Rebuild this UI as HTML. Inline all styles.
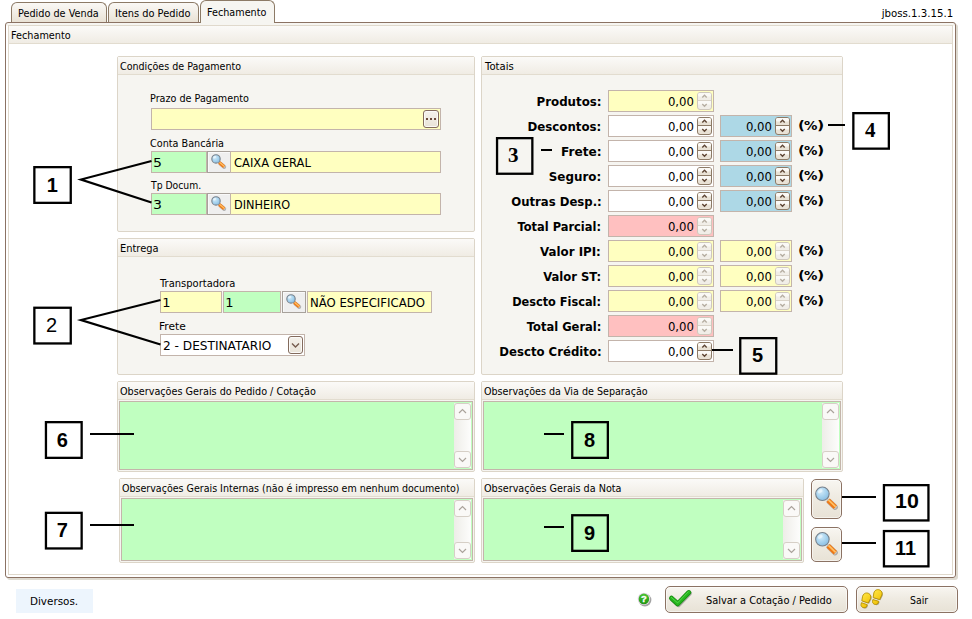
<!DOCTYPE html><html><head><meta charset="utf-8"><title>Fechamento</title><style>
*{box-sizing:border-box;margin:0;padding:0}
html,body{width:972px;height:619px;overflow:hidden;background:#fff}
body{position:relative;font-family:'DejaVu Sans','Liberation Sans',sans-serif;font-size:11px;color:#000}
.a{position:absolute}
.t{position:absolute;white-space:nowrap;transform-origin:0 50%}
.grp{position:absolute;border:1px solid #dcd5c8;background:#f6f5f1;border-radius:2px}
.grp .hd{position:absolute;left:0;right:0;top:0;height:18px;border-bottom:1px solid #e2dccf;background:linear-gradient(#fbfaf8,#f0ece4)}
.in{position:absolute;border:1px solid #c3b4ab;height:22px}
.y{background:#ffffc0}.g{background:#c0ffc0}.w{background:#fff}.bl{background:#add8e6}.p{background:#ffc0c0}
.ln{position:absolute;background:#000;height:2px}
.sp{position:absolute;width:15px;height:18px;border:1px solid #8c7a66;border-radius:3px;background:linear-gradient(#fdfcfa,#e9e2d6)}
.sp.dis{border-color:#cfc8bc;background:#f6f4ee}
.btn{position:absolute;border:1px solid #8b7263;border-radius:5px;background:linear-gradient(#f8f6f1,#efebe2 45%,#e8e2d6);box-shadow:inset 0 0 0 1px rgba(255,255,255,.55)}
</style></head><body>
<div class="a" style="left:5px;top:22px;width:951px;height:556px;border:1px solid #8b7263;border-radius:3px;background:linear-gradient(#f6f5f1 0,#f6f5f1 3px,#fff 3px);box-shadow:2px 2px 0 #dedad0"></div>
<div class="a" style="left:11px;top:2px;width:96px;height:20px;border:1px solid #8c7a66;border-bottom:none;border-radius:6px 6px 0 0;background:linear-gradient(#faf8f5,#f3efe8 45%,#e9e2d5)"></div>
<div class="a" style="left:108px;top:2px;width:91px;height:20px;border:1px solid #8c7a66;border-bottom:none;border-radius:6px 6px 0 0;background:linear-gradient(#faf8f5,#f3efe8 45%,#e9e2d5)"></div>
<div class="a" style="left:200px;top:0px;width:75px;height:23px;border:1px solid #8c7a66;border-bottom:none;border-radius:6px 6px 0 0;background:#f6f5f1"></div>
<div class="t" style="left:18.02px;top:7.00px;font-size:11px;line-height:13px;transform:scaleX(0.8811);">Pedido de Venda</div>
<div class="t" style="left:115.31px;top:7.00px;font-size:11px;line-height:13px;transform:scaleX(0.8928);">Itens do Pedido</div>
<div class="t" style="left:206.92px;top:6.00px;font-size:11px;line-height:13px;transform:scaleX(0.8758);">Fechamento</div>
<div class="t" style="right:18.37px;transform-origin:100% 50%;top:7.00px;font-size:11px;line-height:13px;transform:scaleX(0.9263);">jboss.1.3.15.1</div>
<div class="a" style="left:8px;top:25px;width:945px;height:550px;border:1px solid #e0d9cc;background:#fff"></div>
<div class="a" style="left:9px;top:26px;width:943px;height:18px;border-bottom:1px solid #e2dccf;background:linear-gradient(#fbfaf8,#f0ece4)"></div>
<div class="t" style="left:11.22px;top:29.00px;font-size:11px;line-height:13px;transform:scaleX(0.8803);">Fechamento</div>
<div class="grp" style="left:117px;top:56px;width:358px;height:176px"><div class="hd"></div></div>
<div class="t" style="left:120.33px;top:60.00px;font-size:11px;line-height:13px;transform:scaleX(0.8674);">Condições de Pagamento</div>
<div class="grp" style="left:117px;top:238px;width:358px;height:137px"><div class="hd"></div></div>
<div class="t" style="left:120.30px;top:242.00px;font-size:11px;line-height:13px;transform:scaleX(0.8976);">Entrega</div>
<div class="grp" style="left:481px;top:56px;width:362px;height:319px"><div class="hd"></div></div>
<div class="t" style="left:485.20px;top:60.00px;font-size:11px;line-height:13px;transform:scaleX(0.9161);">Totais</div>
<div class="grp" style="left:117px;top:381px;width:358px;height:91px"><div class="hd"></div></div>
<div class="t" style="left:120.32px;top:385.00px;font-size:11px;line-height:13px;transform:scaleX(0.8779);">Observações Gerais do Pedido / Cotação</div>
<div class="grp" style="left:481px;top:381px;width:362px;height:91px"><div class="hd"></div></div>
<div class="t" style="left:484.33px;top:385.00px;font-size:11px;line-height:13px;transform:scaleX(0.8706);">Observações da Via de Separação</div>
<div class="grp" style="left:119px;top:478px;width:356px;height:85px"><div class="hd"></div></div>
<div class="t" style="left:122.34px;top:482.00px;font-size:11px;line-height:13px;transform:scaleX(0.8643);">Observações Gerais Internas (não é impresso em nenhum documento)</div>
<div class="grp" style="left:481px;top:478px;width:323px;height:85px"><div class="hd"></div></div>
<div class="t" style="left:484.32px;top:482.00px;font-size:11px;line-height:13px;transform:scaleX(0.8774);">Observações Gerais da Nota</div>
<svg class="a" style="left:0;top:0" width="0" height="0"><defs><radialGradient id="mg" cx="38%" cy="32%" r="75%"><stop offset="0" stop-color="#d4ecfa"/><stop offset="0.55" stop-color="#a6d2ee"/><stop offset="1" stop-color="#86bbe0"/></radialGradient></defs></svg>
<div class="t" style="left:150.12px;top:92.00px;font-size:11px;line-height:13px;transform:scaleX(0.8750);">Prazo de Pagamento</div>
<div class="in y" style="left:151px;top:108px;width:290px;height:22px"></div>
<div class="a" style="left:423px;top:110px;width:16px;height:18px;border:1px solid #836b5d;border-radius:3px;background:linear-gradient(#f4f1eb,#e9e3d8);box-shadow:inset 0 0 0 1px #fbfaf8"></div>
<div class="a" style="left:426px;top:118px;width:2px;height:2px;background:#6b4a3a;box-shadow:4px 0 #6b4a3a,8px 0 #6b4a3a"></div>
<div class="t" style="left:150.12px;top:137.00px;font-size:11px;line-height:13px;transform:scaleX(0.8780);">Conta Bancária</div>
<div class="in g" style="left:151px;top:151px;width:56px;height:22px"></div>
<div class="t" style="left:153.22px;top:155.00px;font-size:13px;line-height:15px;transform:scaleX(1.0833);">5</div>
<div class="a" style="left:207px;top:151px;width:24px;height:22px;border:1px solid #a7a19b;background:#efefef;box-shadow:inset 1px 1px 0 #f9f9f9"></div>
<svg class="a" style="left:0;top:0;overflow:visible" width="1" height="1"><line x1="220.46" y1="163.86" x2="224.24" y2="167.04" stroke="#555" stroke-opacity=".4" stroke-width="3.90" stroke-linecap="round"/><line x1="219.86" y1="163.06" x2="223.64" y2="166.24" stroke="#c4c7cb" stroke-width="3.30" stroke-linecap="round"/><line x1="219.23" y1="162.53" x2="224.19" y2="166.71" stroke="#ee7816" stroke-width="3.30"/><line x1="219.44" y1="162.28" x2="224.41" y2="166.45" stroke="#ffc064" stroke-width="1.19"/><circle cx="216" cy="158.9" r="4.20" fill="url(#mg)" stroke="#78818b" stroke-width="1.1"/><ellipse cx="214.57" cy="157.19" rx="1.71" ry="1.14" fill="#fff" fill-opacity=".5" transform="rotate(-35 214.57 157.19)"/></svg>
<div class="in y" style="left:230px;top:151px;width:211px;height:22px"></div>
<div class="t" style="left:233.71px;top:155.00px;font-size:13px;line-height:15px;transform:scaleX(0.8872);">CAIXA GERAL</div>
<div class="t" style="left:151.00px;top:179.00px;font-size:11px;line-height:13px;transform:scaleX(0.8407);">Tp Docum.</div>
<div class="in g" style="left:151px;top:193px;width:56px;height:22px"></div>
<div class="t" style="left:153.22px;top:197.00px;font-size:13px;line-height:15px;transform:scaleX(1.0833);">3</div>
<div class="a" style="left:207px;top:193px;width:24px;height:22px;border:1px solid #a7a19b;background:#efefef;box-shadow:inset 1px 1px 0 #f9f9f9"></div>
<svg class="a" style="left:0;top:0;overflow:visible" width="1" height="1"><line x1="220.46" y1="205.86" x2="224.24" y2="209.04" stroke="#555" stroke-opacity=".4" stroke-width="3.90" stroke-linecap="round"/><line x1="219.86" y1="205.06" x2="223.64" y2="208.24" stroke="#c4c7cb" stroke-width="3.30" stroke-linecap="round"/><line x1="219.23" y1="204.53" x2="224.19" y2="208.71" stroke="#ee7816" stroke-width="3.30"/><line x1="219.44" y1="204.28" x2="224.41" y2="208.45" stroke="#ffc064" stroke-width="1.19"/><circle cx="216" cy="200.9" r="4.20" fill="url(#mg)" stroke="#78818b" stroke-width="1.1"/><ellipse cx="214.57" cy="199.19" rx="1.71" ry="1.14" fill="#fff" fill-opacity=".5" transform="rotate(-35 214.57 199.19)"/></svg>
<div class="in y" style="left:230px;top:193px;width:211px;height:22px"></div>
<div class="t" style="left:233.73px;top:197.00px;font-size:13px;line-height:15px;transform:scaleX(0.8683);">DINHEIRO</div>
<div class="t" style="left:160.00px;top:277.00px;font-size:11px;line-height:13px;transform:scaleX(0.9037);">Transportadora</div>
<div class="in y" style="left:160px;top:291px;width:62px;height:22px"></div>
<div class="t" style="left:162.20px;top:295.00px;font-size:13px;line-height:15px;">1</div>
<div class="in g" style="left:223px;top:291px;width:58px;height:22px"></div>
<div class="t" style="left:225.20px;top:295.00px;font-size:13px;line-height:15px;">1</div>
<div class="a" style="left:282px;top:291px;width:24px;height:22px;border:1px solid #a7a19b;background:#efefef;box-shadow:inset 1px 1px 0 #f9f9f9"></div>
<svg class="a" style="left:0;top:0;overflow:visible" width="1" height="1"><line x1="295.46" y1="303.86" x2="299.24" y2="307.04" stroke="#555" stroke-opacity=".4" stroke-width="3.90" stroke-linecap="round"/><line x1="294.86" y1="303.06" x2="298.64" y2="306.24" stroke="#c4c7cb" stroke-width="3.30" stroke-linecap="round"/><line x1="294.23" y1="302.53" x2="299.19" y2="306.71" stroke="#ee7816" stroke-width="3.30"/><line x1="294.44" y1="302.28" x2="299.41" y2="306.45" stroke="#ffc064" stroke-width="1.19"/><circle cx="291" cy="298.9" r="4.20" fill="url(#mg)" stroke="#78818b" stroke-width="1.1"/><ellipse cx="289.57" cy="297.19" rx="1.71" ry="1.14" fill="#fff" fill-opacity=".5" transform="rotate(-35 289.57 297.19)"/></svg>
<div class="in y" style="left:307px;top:291px;width:125px;height:22px"></div>
<div class="t" style="left:309.50px;top:295.00px;font-size:13px;line-height:15px;transform:scaleX(0.8992);">NÃO ESPECIFICADO</div>
<div class="t" style="left:159.03px;top:320.00px;font-size:11px;line-height:13px;transform:scaleX(0.9692);">Frete</div>
<div class="in w" style="left:160px;top:334px;width:145px;height:22px"></div>
<div class="t" style="left:162.67px;top:338.00px;font-size:13px;line-height:15px;transform:scaleX(0.9333);">2 - DESTINATARIO</div>
<div class="a" style="left:288px;top:336px;width:15px;height:18px;border:1px solid #836b5d;border-radius:3px;background:linear-gradient(#f4f1eb,#e9e3d8);box-shadow:inset 0 0 0 1px #fbfaf8"></div>
<svg class="a" style="left:291px;top:342px" width="9" height="7" viewBox="0 0 9 7"><path d="M1 1.5 L4.5 5 L8 1.5" fill="none" stroke="#755b4d" stroke-width="1.4"/></svg>
<div class="t" style="right:370.62px;transform-origin:100% 50%;top:94.00px;font-size:13px;line-height:15px;font-weight:bold;transform:scaleX(0.9087);">Produtos:</div>
<div class="in y" style="left:608px;top:90px;width:106px;height:22px"></div>
<div class="t" style="right:277.74px;transform-origin:100% 50%;top:94.00px;font-size:13px;line-height:15px;transform:scaleX(0.9000);">0,00</div>
<svg class="a" style="left:697px;top:92px" width="15" height="18" viewBox="0 0 15 18"><rect x="0.5" y="0.5" width="14" height="17" rx="2.5" fill="#f1eee8" stroke="#cfc8bc"/><rect x="1" y="1" width="13" height="3.5" rx="1.5" fill="#faf9f6"/><rect x="1" y="9" width="13" height="3.5" fill="#faf9f6"/><line x1="1" y1="8.5" x2="14" y2="8.5" stroke="#d9d3c8" stroke-width="1"/><path d="M5.3 5.4 L7.5 3.2 L9.7 5.4 M5.3 12 L7.5 14.2 L9.7 12" fill="none" stroke="#b6aea2" stroke-width="1.35"/></svg>
<div class="t" style="right:370.79px;transform-origin:100% 50%;top:119.00px;font-size:13px;line-height:15px;font-weight:bold;transform:scaleX(0.9076);">Descontos:</div>
<div class="in w" style="left:608px;top:115px;width:106px;height:22px"></div>
<div class="t" style="right:277.74px;transform-origin:100% 50%;top:119.00px;font-size:13px;line-height:15px;transform:scaleX(0.9000);">0,00</div>
<svg class="a" style="left:697px;top:117px" width="15" height="18" viewBox="0 0 15 18"><rect x="0.5" y="0.5" width="14" height="17" rx="2.5" fill="#e9e2d6" stroke="#8c7a66"/><rect x="1" y="1" width="13" height="3.5" rx="1.5" fill="#fbf9f6"/><rect x="1" y="9" width="13" height="3.5" fill="#fbf9f6"/><line x1="1" y1="8.5" x2="14" y2="8.5" stroke="#8c7a66" stroke-width="1"/><path d="M5.3 5.4 L7.5 3.2 L9.7 5.4 M5.3 12 L7.5 14.2 L9.7 12" fill="none" stroke="#5d4433" stroke-width="1.35"/></svg>
<div class="in bl" style="left:720px;top:115px;width:72px;height:22px"></div>
<div class="t" style="right:199.84px;transform-origin:100% 50%;top:119.00px;font-size:13px;line-height:15px;transform:scaleX(0.9000);">0,00</div>
<svg class="a" style="left:775px;top:117px" width="15" height="18" viewBox="0 0 15 18"><rect x="0.5" y="0.5" width="14" height="17" rx="2.5" fill="#e9e2d6" stroke="#8c7a66"/><rect x="1" y="1" width="13" height="3.5" rx="1.5" fill="#fbf9f6"/><rect x="1" y="9" width="13" height="3.5" fill="#fbf9f6"/><line x1="1" y1="8.5" x2="14" y2="8.5" stroke="#8c7a66" stroke-width="1"/><path d="M5.3 5.4 L7.5 3.2 L9.7 5.4 M5.3 12 L7.5 14.2 L9.7 12" fill="none" stroke="#5d4433" stroke-width="1.35"/></svg>
<div class="t" style="left:797.65px;top:118.00px;font-size:13px;line-height:15px;font-weight:bold;transform:scaleX(1.1500);">(</div>
<div class="t" style="left:804.00px;top:118.00px;font-size:13px;line-height:15px;font-weight:bold;transform:scaleX(1.0308);">%</div>
<div class="t" style="left:817.17px;top:118.00px;font-size:13px;line-height:15px;font-weight:bold;transform:scaleX(1.2250);">)</div>
<div class="t" style="right:370.59px;transform-origin:100% 50%;top:144.00px;font-size:13px;line-height:15px;font-weight:bold;transform:scaleX(0.9317);">Frete:</div>
<div class="in w" style="left:608px;top:140px;width:106px;height:22px"></div>
<div class="t" style="right:277.74px;transform-origin:100% 50%;top:144.00px;font-size:13px;line-height:15px;transform:scaleX(0.9000);">0,00</div>
<svg class="a" style="left:697px;top:142px" width="15" height="18" viewBox="0 0 15 18"><rect x="0.5" y="0.5" width="14" height="17" rx="2.5" fill="#e9e2d6" stroke="#8c7a66"/><rect x="1" y="1" width="13" height="3.5" rx="1.5" fill="#fbf9f6"/><rect x="1" y="9" width="13" height="3.5" fill="#fbf9f6"/><line x1="1" y1="8.5" x2="14" y2="8.5" stroke="#8c7a66" stroke-width="1"/><path d="M5.3 5.4 L7.5 3.2 L9.7 5.4 M5.3 12 L7.5 14.2 L9.7 12" fill="none" stroke="#5d4433" stroke-width="1.35"/></svg>
<div class="in bl" style="left:720px;top:140px;width:72px;height:22px"></div>
<div class="t" style="right:199.84px;transform-origin:100% 50%;top:144.00px;font-size:13px;line-height:15px;transform:scaleX(0.9000);">0,00</div>
<svg class="a" style="left:775px;top:142px" width="15" height="18" viewBox="0 0 15 18"><rect x="0.5" y="0.5" width="14" height="17" rx="2.5" fill="#e9e2d6" stroke="#8c7a66"/><rect x="1" y="1" width="13" height="3.5" rx="1.5" fill="#fbf9f6"/><rect x="1" y="9" width="13" height="3.5" fill="#fbf9f6"/><line x1="1" y1="8.5" x2="14" y2="8.5" stroke="#8c7a66" stroke-width="1"/><path d="M5.3 5.4 L7.5 3.2 L9.7 5.4 M5.3 12 L7.5 14.2 L9.7 12" fill="none" stroke="#5d4433" stroke-width="1.35"/></svg>
<div class="t" style="left:797.65px;top:143.00px;font-size:13px;line-height:15px;font-weight:bold;transform:scaleX(1.1500);">(</div>
<div class="t" style="left:804.00px;top:143.00px;font-size:13px;line-height:15px;font-weight:bold;transform:scaleX(1.0308);">%</div>
<div class="t" style="left:817.17px;top:143.00px;font-size:13px;line-height:15px;font-weight:bold;transform:scaleX(1.2250);">)</div>
<div class="t" style="right:370.83px;transform-origin:100% 50%;top:169.00px;font-size:13px;line-height:15px;font-weight:bold;transform:scaleX(0.9164);">Seguro:</div>
<div class="in w" style="left:608px;top:165px;width:106px;height:22px"></div>
<div class="t" style="right:277.74px;transform-origin:100% 50%;top:169.00px;font-size:13px;line-height:15px;transform:scaleX(0.9000);">0,00</div>
<svg class="a" style="left:697px;top:167px" width="15" height="18" viewBox="0 0 15 18"><rect x="0.5" y="0.5" width="14" height="17" rx="2.5" fill="#e9e2d6" stroke="#8c7a66"/><rect x="1" y="1" width="13" height="3.5" rx="1.5" fill="#fbf9f6"/><rect x="1" y="9" width="13" height="3.5" fill="#fbf9f6"/><line x1="1" y1="8.5" x2="14" y2="8.5" stroke="#8c7a66" stroke-width="1"/><path d="M5.3 5.4 L7.5 3.2 L9.7 5.4 M5.3 12 L7.5 14.2 L9.7 12" fill="none" stroke="#5d4433" stroke-width="1.35"/></svg>
<div class="in bl" style="left:720px;top:165px;width:72px;height:22px"></div>
<div class="t" style="right:199.84px;transform-origin:100% 50%;top:169.00px;font-size:13px;line-height:15px;transform:scaleX(0.9000);">0,00</div>
<svg class="a" style="left:775px;top:167px" width="15" height="18" viewBox="0 0 15 18"><rect x="0.5" y="0.5" width="14" height="17" rx="2.5" fill="#e9e2d6" stroke="#8c7a66"/><rect x="1" y="1" width="13" height="3.5" rx="1.5" fill="#fbf9f6"/><rect x="1" y="9" width="13" height="3.5" fill="#fbf9f6"/><line x1="1" y1="8.5" x2="14" y2="8.5" stroke="#8c7a66" stroke-width="1"/><path d="M5.3 5.4 L7.5 3.2 L9.7 5.4 M5.3 12 L7.5 14.2 L9.7 12" fill="none" stroke="#5d4433" stroke-width="1.35"/></svg>
<div class="t" style="left:797.65px;top:168.00px;font-size:13px;line-height:15px;font-weight:bold;transform:scaleX(1.1500);">(</div>
<div class="t" style="left:804.00px;top:168.00px;font-size:13px;line-height:15px;font-weight:bold;transform:scaleX(1.0308);">%</div>
<div class="t" style="left:817.17px;top:168.00px;font-size:13px;line-height:15px;font-weight:bold;transform:scaleX(1.2250);">)</div>
<div class="t" style="right:370.41px;transform-origin:100% 50%;top:194.00px;font-size:13px;line-height:15px;font-weight:bold;transform:scaleX(0.8980);">Outras Desp.:</div>
<div class="in w" style="left:608px;top:190px;width:106px;height:22px"></div>
<div class="t" style="right:277.74px;transform-origin:100% 50%;top:194.00px;font-size:13px;line-height:15px;transform:scaleX(0.9000);">0,00</div>
<svg class="a" style="left:697px;top:192px" width="15" height="18" viewBox="0 0 15 18"><rect x="0.5" y="0.5" width="14" height="17" rx="2.5" fill="#e9e2d6" stroke="#8c7a66"/><rect x="1" y="1" width="13" height="3.5" rx="1.5" fill="#fbf9f6"/><rect x="1" y="9" width="13" height="3.5" fill="#fbf9f6"/><line x1="1" y1="8.5" x2="14" y2="8.5" stroke="#8c7a66" stroke-width="1"/><path d="M5.3 5.4 L7.5 3.2 L9.7 5.4 M5.3 12 L7.5 14.2 L9.7 12" fill="none" stroke="#5d4433" stroke-width="1.35"/></svg>
<div class="in bl" style="left:720px;top:190px;width:72px;height:22px"></div>
<div class="t" style="right:199.84px;transform-origin:100% 50%;top:194.00px;font-size:13px;line-height:15px;transform:scaleX(0.9000);">0,00</div>
<svg class="a" style="left:775px;top:192px" width="15" height="18" viewBox="0 0 15 18"><rect x="0.5" y="0.5" width="14" height="17" rx="2.5" fill="#e9e2d6" stroke="#8c7a66"/><rect x="1" y="1" width="13" height="3.5" rx="1.5" fill="#fbf9f6"/><rect x="1" y="9" width="13" height="3.5" fill="#fbf9f6"/><line x1="1" y1="8.5" x2="14" y2="8.5" stroke="#8c7a66" stroke-width="1"/><path d="M5.3 5.4 L7.5 3.2 L9.7 5.4 M5.3 12 L7.5 14.2 L9.7 12" fill="none" stroke="#5d4433" stroke-width="1.35"/></svg>
<div class="t" style="left:797.65px;top:193.00px;font-size:13px;line-height:15px;font-weight:bold;transform:scaleX(1.1500);">(</div>
<div class="t" style="left:804.00px;top:193.00px;font-size:13px;line-height:15px;font-weight:bold;transform:scaleX(1.0308);">%</div>
<div class="t" style="left:817.17px;top:193.00px;font-size:13px;line-height:15px;font-weight:bold;transform:scaleX(1.2250);">)</div>
<div class="t" style="right:371.12px;transform-origin:100% 50%;top:219.00px;font-size:13px;line-height:15px;font-weight:bold;transform:scaleX(0.8798);">Total Parcial:</div>
<div class="in p" style="left:608px;top:215px;width:106px;height:22px"></div>
<div class="t" style="right:277.74px;transform-origin:100% 50%;top:219.00px;font-size:13px;line-height:15px;transform:scaleX(0.9000);">0,00</div>
<svg class="a" style="left:697px;top:217px" width="15" height="18" viewBox="0 0 15 18"><rect x="0.5" y="0.5" width="14" height="17" rx="2.5" fill="#f1eee8" stroke="#cfc8bc"/><rect x="1" y="1" width="13" height="3.5" rx="1.5" fill="#faf9f6"/><rect x="1" y="9" width="13" height="3.5" fill="#faf9f6"/><line x1="1" y1="8.5" x2="14" y2="8.5" stroke="#d9d3c8" stroke-width="1"/><path d="M5.3 5.4 L7.5 3.2 L9.7 5.4 M5.3 12 L7.5 14.2 L9.7 12" fill="none" stroke="#b6aea2" stroke-width="1.35"/></svg>
<div class="t" style="right:371.22px;transform-origin:100% 50%;top:244.00px;font-size:13px;line-height:15px;font-weight:bold;transform:scaleX(0.9106);">Valor IPI:</div>
<div class="in y" style="left:608px;top:240px;width:106px;height:22px"></div>
<div class="t" style="right:277.74px;transform-origin:100% 50%;top:244.00px;font-size:13px;line-height:15px;transform:scaleX(0.9000);">0,00</div>
<svg class="a" style="left:697px;top:242px" width="15" height="18" viewBox="0 0 15 18"><rect x="0.5" y="0.5" width="14" height="17" rx="2.5" fill="#f1eee8" stroke="#cfc8bc"/><rect x="1" y="1" width="13" height="3.5" rx="1.5" fill="#faf9f6"/><rect x="1" y="9" width="13" height="3.5" fill="#faf9f6"/><line x1="1" y1="8.5" x2="14" y2="8.5" stroke="#d9d3c8" stroke-width="1"/><path d="M5.3 5.4 L7.5 3.2 L9.7 5.4 M5.3 12 L7.5 14.2 L9.7 12" fill="none" stroke="#b6aea2" stroke-width="1.35"/></svg>
<div class="in y" style="left:720px;top:240px;width:72px;height:22px"></div>
<div class="t" style="right:199.84px;transform-origin:100% 50%;top:244.00px;font-size:13px;line-height:15px;transform:scaleX(0.9000);">0,00</div>
<svg class="a" style="left:775px;top:242px" width="15" height="18" viewBox="0 0 15 18"><rect x="0.5" y="0.5" width="14" height="17" rx="2.5" fill="#f1eee8" stroke="#cfc8bc"/><rect x="1" y="1" width="13" height="3.5" rx="1.5" fill="#faf9f6"/><rect x="1" y="9" width="13" height="3.5" fill="#faf9f6"/><line x1="1" y1="8.5" x2="14" y2="8.5" stroke="#d9d3c8" stroke-width="1"/><path d="M5.3 5.4 L7.5 3.2 L9.7 5.4 M5.3 12 L7.5 14.2 L9.7 12" fill="none" stroke="#b6aea2" stroke-width="1.35"/></svg>
<div class="t" style="left:797.65px;top:243.00px;font-size:13px;line-height:15px;font-weight:bold;transform:scaleX(1.1500);">(</div>
<div class="t" style="left:804.00px;top:243.00px;font-size:13px;line-height:15px;font-weight:bold;transform:scaleX(1.0308);">%</div>
<div class="t" style="left:817.17px;top:243.00px;font-size:13px;line-height:15px;font-weight:bold;transform:scaleX(1.2250);">)</div>
<div class="t" style="right:370.96px;transform-origin:100% 50%;top:269.00px;font-size:13px;line-height:15px;font-weight:bold;transform:scaleX(0.8906);">Valor ST:</div>
<div class="in y" style="left:608px;top:265px;width:106px;height:22px"></div>
<div class="t" style="right:277.74px;transform-origin:100% 50%;top:269.00px;font-size:13px;line-height:15px;transform:scaleX(0.9000);">0,00</div>
<svg class="a" style="left:697px;top:267px" width="15" height="18" viewBox="0 0 15 18"><rect x="0.5" y="0.5" width="14" height="17" rx="2.5" fill="#f1eee8" stroke="#cfc8bc"/><rect x="1" y="1" width="13" height="3.5" rx="1.5" fill="#faf9f6"/><rect x="1" y="9" width="13" height="3.5" fill="#faf9f6"/><line x1="1" y1="8.5" x2="14" y2="8.5" stroke="#d9d3c8" stroke-width="1"/><path d="M5.3 5.4 L7.5 3.2 L9.7 5.4 M5.3 12 L7.5 14.2 L9.7 12" fill="none" stroke="#b6aea2" stroke-width="1.35"/></svg>
<div class="in y" style="left:720px;top:265px;width:72px;height:22px"></div>
<div class="t" style="right:199.84px;transform-origin:100% 50%;top:269.00px;font-size:13px;line-height:15px;transform:scaleX(0.9000);">0,00</div>
<svg class="a" style="left:775px;top:267px" width="15" height="18" viewBox="0 0 15 18"><rect x="0.5" y="0.5" width="14" height="17" rx="2.5" fill="#f1eee8" stroke="#cfc8bc"/><rect x="1" y="1" width="13" height="3.5" rx="1.5" fill="#faf9f6"/><rect x="1" y="9" width="13" height="3.5" fill="#faf9f6"/><line x1="1" y1="8.5" x2="14" y2="8.5" stroke="#d9d3c8" stroke-width="1"/><path d="M5.3 5.4 L7.5 3.2 L9.7 5.4 M5.3 12 L7.5 14.2 L9.7 12" fill="none" stroke="#b6aea2" stroke-width="1.35"/></svg>
<div class="t" style="left:797.65px;top:268.00px;font-size:13px;line-height:15px;font-weight:bold;transform:scaleX(1.1500);">(</div>
<div class="t" style="left:804.00px;top:268.00px;font-size:13px;line-height:15px;font-weight:bold;transform:scaleX(1.0308);">%</div>
<div class="t" style="left:817.17px;top:268.00px;font-size:13px;line-height:15px;font-weight:bold;transform:scaleX(1.2250);">)</div>
<div class="t" style="right:371.18px;transform-origin:100% 50%;top:294.00px;font-size:13px;line-height:15px;font-weight:bold;transform:scaleX(0.8710);">Descto Fiscal:</div>
<div class="in y" style="left:608px;top:290px;width:106px;height:22px"></div>
<div class="t" style="right:277.74px;transform-origin:100% 50%;top:294.00px;font-size:13px;line-height:15px;transform:scaleX(0.9000);">0,00</div>
<svg class="a" style="left:697px;top:292px" width="15" height="18" viewBox="0 0 15 18"><rect x="0.5" y="0.5" width="14" height="17" rx="2.5" fill="#f1eee8" stroke="#cfc8bc"/><rect x="1" y="1" width="13" height="3.5" rx="1.5" fill="#faf9f6"/><rect x="1" y="9" width="13" height="3.5" fill="#faf9f6"/><line x1="1" y1="8.5" x2="14" y2="8.5" stroke="#d9d3c8" stroke-width="1"/><path d="M5.3 5.4 L7.5 3.2 L9.7 5.4 M5.3 12 L7.5 14.2 L9.7 12" fill="none" stroke="#b6aea2" stroke-width="1.35"/></svg>
<div class="in y" style="left:720px;top:290px;width:72px;height:22px"></div>
<div class="t" style="right:199.84px;transform-origin:100% 50%;top:294.00px;font-size:13px;line-height:15px;transform:scaleX(0.9000);">0,00</div>
<svg class="a" style="left:775px;top:292px" width="15" height="18" viewBox="0 0 15 18"><rect x="0.5" y="0.5" width="14" height="17" rx="2.5" fill="#f1eee8" stroke="#cfc8bc"/><rect x="1" y="1" width="13" height="3.5" rx="1.5" fill="#faf9f6"/><rect x="1" y="9" width="13" height="3.5" fill="#faf9f6"/><line x1="1" y1="8.5" x2="14" y2="8.5" stroke="#d9d3c8" stroke-width="1"/><path d="M5.3 5.4 L7.5 3.2 L9.7 5.4 M5.3 12 L7.5 14.2 L9.7 12" fill="none" stroke="#b6aea2" stroke-width="1.35"/></svg>
<div class="t" style="left:797.65px;top:293.00px;font-size:13px;line-height:15px;font-weight:bold;transform:scaleX(1.1500);">(</div>
<div class="t" style="left:804.00px;top:293.00px;font-size:13px;line-height:15px;font-weight:bold;transform:scaleX(1.0308);">%</div>
<div class="t" style="left:817.17px;top:293.00px;font-size:13px;line-height:15px;font-weight:bold;transform:scaleX(1.2250);">)</div>
<div class="t" style="right:370.78px;transform-origin:100% 50%;top:319.00px;font-size:13px;line-height:15px;font-weight:bold;transform:scaleX(0.8843);">Total Geral:</div>
<div class="in p" style="left:608px;top:315px;width:106px;height:22px"></div>
<div class="t" style="right:277.74px;transform-origin:100% 50%;top:319.00px;font-size:13px;line-height:15px;transform:scaleX(0.9000);">0,00</div>
<svg class="a" style="left:697px;top:317px" width="15" height="18" viewBox="0 0 15 18"><rect x="0.5" y="0.5" width="14" height="17" rx="2.5" fill="#f1eee8" stroke="#cfc8bc"/><rect x="1" y="1" width="13" height="3.5" rx="1.5" fill="#faf9f6"/><rect x="1" y="9" width="13" height="3.5" fill="#faf9f6"/><line x1="1" y1="8.5" x2="14" y2="8.5" stroke="#d9d3c8" stroke-width="1"/><path d="M5.3 5.4 L7.5 3.2 L9.7 5.4 M5.3 12 L7.5 14.2 L9.7 12" fill="none" stroke="#b6aea2" stroke-width="1.35"/></svg>
<div class="t" style="right:370.55px;transform-origin:100% 50%;top:344.00px;font-size:13px;line-height:15px;font-weight:bold;transform:scaleX(0.9000);">Descto Crédito:</div>
<div class="in w" style="left:608px;top:340px;width:106px;height:22px"></div>
<div class="t" style="right:277.74px;transform-origin:100% 50%;top:344.00px;font-size:13px;line-height:15px;transform:scaleX(0.9000);">0,00</div>
<svg class="a" style="left:697px;top:342px" width="15" height="18" viewBox="0 0 15 18"><rect x="0.5" y="0.5" width="14" height="17" rx="2.5" fill="#e9e2d6" stroke="#8c7a66"/><rect x="1" y="1" width="13" height="3.5" rx="1.5" fill="#fbf9f6"/><rect x="1" y="9" width="13" height="3.5" fill="#fbf9f6"/><line x1="1" y1="8.5" x2="14" y2="8.5" stroke="#8c7a66" stroke-width="1"/><path d="M5.3 5.4 L7.5 3.2 L9.7 5.4 M5.3 12 L7.5 14.2 L9.7 12" fill="none" stroke="#5d4433" stroke-width="1.35"/></svg>
<div class="in g" style="left:119px;top:401px;width:354px;height:69px;border-color:#c4b5ab"></div>
<div class="a" style="left:454px;top:403px;width:17px;height:65px;background:linear-gradient(90deg,#eeede8,#fdfdfc)"></div>
<svg class="a" style="left:454px;top:403px" width="17" height="17" viewBox="0 0 17 17"><rect x="0.5" y="0.5" width="16" height="16" rx="2.5" fill="#faf9f7" stroke="#d6cfc6"/><path d="M5 10 L8.5 6.5 L12 10" fill="none" stroke="#aaa39b" stroke-width="1.2"/></svg>
<svg class="a" style="left:454px;top:451px" width="17" height="17" viewBox="0 0 17 17"><rect x="0.5" y="0.5" width="16" height="16" rx="2.5" fill="#faf9f7" stroke="#d6cfc6"/><path d="M5 7 L8.5 10.5 L12 7" fill="none" stroke="#aaa39b" stroke-width="1.2"/></svg>
<div class="in g" style="left:483px;top:401px;width:358px;height:69px;border-color:#c4b5ab"></div>
<div class="a" style="left:822px;top:403px;width:17px;height:65px;background:linear-gradient(90deg,#eeede8,#fdfdfc)"></div>
<svg class="a" style="left:822px;top:403px" width="17" height="17" viewBox="0 0 17 17"><rect x="0.5" y="0.5" width="16" height="16" rx="2.5" fill="#faf9f7" stroke="#d6cfc6"/><path d="M5 10 L8.5 6.5 L12 10" fill="none" stroke="#aaa39b" stroke-width="1.2"/></svg>
<svg class="a" style="left:822px;top:451px" width="17" height="17" viewBox="0 0 17 17"><rect x="0.5" y="0.5" width="16" height="16" rx="2.5" fill="#faf9f7" stroke="#d6cfc6"/><path d="M5 7 L8.5 10.5 L12 7" fill="none" stroke="#aaa39b" stroke-width="1.2"/></svg>
<div class="in g" style="left:121px;top:498px;width:352px;height:63px;border-color:#c4b5ab"></div>
<div class="a" style="left:454px;top:500px;width:17px;height:59px;background:linear-gradient(90deg,#eeede8,#fdfdfc)"></div>
<svg class="a" style="left:454px;top:500px" width="17" height="17" viewBox="0 0 17 17"><rect x="0.5" y="0.5" width="16" height="16" rx="2.5" fill="#faf9f7" stroke="#d6cfc6"/><path d="M5 10 L8.5 6.5 L12 10" fill="none" stroke="#aaa39b" stroke-width="1.2"/></svg>
<svg class="a" style="left:454px;top:542px" width="17" height="17" viewBox="0 0 17 17"><rect x="0.5" y="0.5" width="16" height="16" rx="2.5" fill="#faf9f7" stroke="#d6cfc6"/><path d="M5 7 L8.5 10.5 L12 7" fill="none" stroke="#aaa39b" stroke-width="1.2"/></svg>
<div class="in g" style="left:483px;top:498px;width:319px;height:63px;border-color:#c4b5ab"></div>
<div class="a" style="left:783px;top:500px;width:17px;height:59px;background:linear-gradient(90deg,#eeede8,#fdfdfc)"></div>
<svg class="a" style="left:783px;top:500px" width="17" height="17" viewBox="0 0 17 17"><rect x="0.5" y="0.5" width="16" height="16" rx="2.5" fill="#faf9f7" stroke="#d6cfc6"/><path d="M5 10 L8.5 6.5 L12 10" fill="none" stroke="#aaa39b" stroke-width="1.2"/></svg>
<svg class="a" style="left:783px;top:542px" width="17" height="17" viewBox="0 0 17 17"><rect x="0.5" y="0.5" width="16" height="16" rx="2.5" fill="#faf9f7" stroke="#d6cfc6"/><path d="M5 7 L8.5 10.5 L12 7" fill="none" stroke="#aaa39b" stroke-width="1.2"/></svg>
<div class="btn" style="left:811px;top:479px;width:31px;height:40px"></div>
<svg class="a" style="left:0;top:0;overflow:visible" width="1" height="1"><line x1="829.53" y1="501.86" x2="835.17" y2="507.24" stroke="#555" stroke-opacity=".4" stroke-width="5.40" stroke-linecap="round"/><line x1="828.93" y1="501.06" x2="834.57" y2="506.44" stroke="#c4c7cb" stroke-width="4.80" stroke-linecap="round"/><line x1="828.07" y1="500.23" x2="835.33" y2="507.17" stroke="#ee7816" stroke-width="4.80"/><line x1="828.40" y1="499.88" x2="835.66" y2="506.82" stroke="#ffc064" stroke-width="1.73"/><circle cx="822.4" cy="493.8" r="6.75" fill="url(#mg)" stroke="#78818b" stroke-width="1.1"/><ellipse cx="820.21" cy="491.17" rx="2.63" ry="1.75" fill="#fff" fill-opacity=".5" transform="rotate(-35 820.21 491.17)"/></svg>
<div class="btn" style="left:811px;top:527px;width:31px;height:35px"></div>
<svg class="a" style="left:0;top:0;overflow:visible" width="1" height="1"><line x1="829.53" y1="547.36" x2="835.17" y2="552.74" stroke="#555" stroke-opacity=".4" stroke-width="5.40" stroke-linecap="round"/><line x1="828.93" y1="546.56" x2="834.57" y2="551.94" stroke="#c4c7cb" stroke-width="4.80" stroke-linecap="round"/><line x1="828.07" y1="545.73" x2="835.33" y2="552.67" stroke="#ee7816" stroke-width="4.80"/><line x1="828.40" y1="545.38" x2="835.66" y2="552.32" stroke="#ffc064" stroke-width="1.73"/><circle cx="822.4" cy="539.3" r="6.75" fill="url(#mg)" stroke="#78818b" stroke-width="1.1"/><ellipse cx="820.21" cy="536.67" rx="2.63" ry="1.75" fill="#fff" fill-opacity=".5" transform="rotate(-35 820.21 536.67)"/></svg>
<div class="a" style="left:16px;top:589px;width:77px;height:24px;background:#edf5fd"></div>
<div class="t" style="left:30.46px;top:595.00px;font-size:11px;line-height:13px;transform:scaleX(0.9429);">Diversos.</div>
<svg class="a" style="left:0;top:0;overflow:visible" width="1" height="1"><defs><linearGradient id="hg" x1="0" y1="0" x2="0" y2="1"><stop offset="0" stop-color="#4cc435"/><stop offset="1" stop-color="#1f9612"/></linearGradient><linearGradient id="fg" x1="0" y1="0" x2="1" y2="1"><stop offset="0" stop-color="#ffe645"/><stop offset="1" stop-color="#efbd00"/></linearGradient></defs><circle cx="644.9" cy="600" r="6.5" fill="#666" fill-opacity=".6"/><circle cx="643.9" cy="598.9" r="6.2" fill="#ead8ec"/><circle cx="643.9" cy="598.9" r="5.3" fill="url(#hg)"/><text x="643.9" y="602.3" font-size="9.4" font-weight="bold" text-anchor="middle" fill="#fff" stroke="#fff" stroke-width=".35" font-family="Liberation Sans,sans-serif">?</text></svg>
<div class="btn" style="left:665px;top:586px;width:183px;height:27px"></div>
<svg class="a" style="left:0;top:0;overflow:visible" width="1" height="1"><g fill="none" stroke-linecap="round" stroke-linejoin="round"><path d="M672.2 599 L678.4 604.7 L689.5 593.3" stroke="#666" stroke-opacity=".45" stroke-width="5"/><path d="M671.5 598.2 L677.7 603.9 L688.8 592.5" stroke="#16860f" stroke-width="4.9"/><path d="M671.5 598.1 L677.7 603.7 L688.8 592.4" stroke="#25b41d" stroke-width="3.6"/><path d="M671.3 597.4 L677.6 602.9 L688.3 591.8" stroke="#66e058" stroke-opacity=".75" stroke-width="1"/></g></svg>
<div class="t" style="left:706.01px;top:594.00px;font-size:11px;line-height:13px;transform:scaleX(0.8942);">Salvar a Cotação / Pedido</div>
<div class="btn" style="left:856px;top:586px;width:102px;height:27px"></div>
<svg class="a" style="left:0;top:0;overflow:visible" width="1" height="1"><g fill="#5a4a10" fill-opacity=".45"><g transform="translate(865.8 602.6) rotate(19)"><path d="M-3.4 0 L-4.1 -4.6 C-4.3 -10.6 4.1 -10.8 4.2 -5 L3.4 0 Z M-3.1 1.9 L3.1 1.9 L2.9 3.8 C2.5 6.7 -2.5 6.7 -2.9 3.8 Z"/></g><g transform="translate(877.2 599.3) rotate(17)"><path d="M-3.4 0 L-4.1 -4.6 C-4.3 -10.6 4.1 -10.8 4.2 -5 L3.4 0 Z M-3.1 1.9 L3.1 1.9 L2.9 3.8 C2.5 6.7 -2.5 6.7 -2.9 3.8 Z"/></g></g><g fill="url(#fg)" stroke="#b48f00" stroke-width=".8"><g transform="translate(865 601.9) rotate(19)"><path d="M-3.4 0 L-4.1 -4.6 C-4.3 -10.6 4.1 -10.8 4.2 -5 L3.4 0 Z M-3.1 1.9 L3.1 1.9 L2.9 3.8 C2.5 6.7 -2.5 6.7 -2.9 3.8 Z"/></g><g transform="translate(876.4 598.6) rotate(17)"><path d="M-3.4 0 L-4.1 -4.6 C-4.3 -10.6 4.1 -10.8 4.2 -5 L3.4 0 Z M-3.1 1.9 L3.1 1.9 L2.9 3.8 C2.5 6.7 -2.5 6.7 -2.9 3.8 Z"/></g></g></svg>
<div class="t" style="left:909.85px;top:594.00px;font-size:11px;line-height:13px;transform:scaleX(0.8500);">Sair</div>
<svg class="a" style="left:0;top:0;overflow:visible" width="1" height="1"><rect x="34.35" y="167.15" width="36.40" height="35.70" fill="none" stroke="#000" stroke-width="2.3"/></svg>
<div class="t" style="left:46.80px;top:174.00px;font-size:20px;line-height:22px;font-weight:bold;font-family:'Liberation Sans',sans-serif;">1</div>
<svg class="a" style="left:0;top:0;overflow:visible" width="1" height="1"><rect x="34.35" y="307.75" width="36.40" height="35.70" fill="none" stroke="#000" stroke-width="2.3"/></svg>
<div class="t" style="left:46.00px;top:314.00px;font-size:20px;line-height:22px;font-family:'Liberation Sans',sans-serif;">2</div>
<svg class="a" style="left:0;top:0;overflow:visible" width="1" height="1"><rect x="497.05" y="138.15" width="35.30" height="35.60" fill="none" stroke="#000" stroke-width="2.3"/></svg>
<div class="t" style="left:508.00px;top:143.90px;font-size:21px;line-height:23px;font-weight:bold;font-family:'Liberation Serif',serif;">3</div>
<svg class="a" style="left:0;top:0;overflow:visible" width="1" height="1"><rect x="853.35" y="113.15" width="35.50" height="35.50" fill="none" stroke="#000" stroke-width="2.3"/></svg>
<div class="t" style="left:865.00px;top:118.90px;font-size:21px;line-height:23px;font-weight:bold;font-family:'Liberation Serif',serif;">4</div>
<svg class="a" style="left:0;top:0;overflow:visible" width="1" height="1"><rect x="740.25" y="338.15" width="36.00" height="35.50" fill="none" stroke="#000" stroke-width="2.3"/></svg>
<div class="t" style="left:752.00px;top:343.60px;font-size:20px;line-height:22px;font-weight:bold;font-family:'Liberation Sans',sans-serif;">5</div>
<svg class="a" style="left:0;top:0;overflow:visible" width="1" height="1"><rect x="45.95" y="422.15" width="35.70" height="35.70" fill="none" stroke="#000" stroke-width="2.3"/></svg>
<div class="t" style="left:56.80px;top:428.80px;font-size:20px;line-height:22px;font-weight:bold;font-family:'Liberation Sans',sans-serif;">6</div>
<svg class="a" style="left:0;top:0;overflow:visible" width="1" height="1"><rect x="45.95" y="512.85" width="35.70" height="35.60" fill="none" stroke="#000" stroke-width="2.3"/></svg>
<div class="t" style="left:56.80px;top:518.80px;font-size:20px;line-height:22px;font-weight:bold;font-family:'Liberation Sans',sans-serif;">7</div>
<svg class="a" style="left:0;top:0;overflow:visible" width="1" height="1"><rect x="572.25" y="422.15" width="35.60" height="35.70" fill="none" stroke="#000" stroke-width="2.3"/></svg>
<div class="t" style="left:584.00px;top:428.80px;font-size:20px;line-height:22px;font-weight:bold;font-family:'Liberation Sans',sans-serif;">8</div>
<svg class="a" style="left:0;top:0;overflow:visible" width="1" height="1"><rect x="572.25" y="515.25" width="35.60" height="35.60" fill="none" stroke="#000" stroke-width="2.3"/></svg>
<div class="t" style="left:584.00px;top:521.90px;font-size:20px;line-height:22px;font-weight:bold;font-family:'Liberation Sans',sans-serif;">9</div>
<svg class="a" style="left:0;top:0;overflow:visible" width="1" height="1"><rect x="883.95" y="485.15" width="44.50" height="35.30" fill="none" stroke="#000" stroke-width="2.3"/></svg>
<div class="t" style="left:894.53px;top:490.20px;font-size:20px;line-height:22px;font-weight:bold;font-family:'Liberation Sans',sans-serif;transform:scaleX(1.0700);">10</div>
<svg class="a" style="left:0;top:0;overflow:visible" width="1" height="1"><rect x="883.95" y="531.05" width="44.50" height="35.30" fill="none" stroke="#000" stroke-width="2.3"/></svg>
<div class="t" style="left:894.61px;top:536.50px;font-size:20px;line-height:22px;font-weight:bold;font-family:'Liberation Sans',sans-serif;transform:scaleX(0.9950);">11</div>
<div class="ln" style="left:541px;top:149px;width:11px"></div>
<div class="ln" style="left:828px;top:124px;width:17px"></div>
<div class="ln" style="left:712px;top:349px;width:21px"></div>
<div class="ln" style="left:90px;top:433px;width:44px"></div>
<div class="ln" style="left:90px;top:524px;width:44px"></div>
<div class="ln" style="left:544px;top:433px;width:20px"></div>
<div class="ln" style="left:544px;top:526px;width:20px"></div>
<div class="ln" style="left:842px;top:496px;width:34px"></div>
<div class="ln" style="left:842px;top:542px;width:34px"></div>
<svg class="a" style="left:0;top:0" width="972" height="619"><g stroke="#000" stroke-width="2.2" fill="none" stroke-linejoin="miter"><path d="M151.5 161 L81 179.5 L151.5 202.5"/><path d="M160.5 300 L81 320 L160.5 344.5"/></g></svg>
</body></html>
